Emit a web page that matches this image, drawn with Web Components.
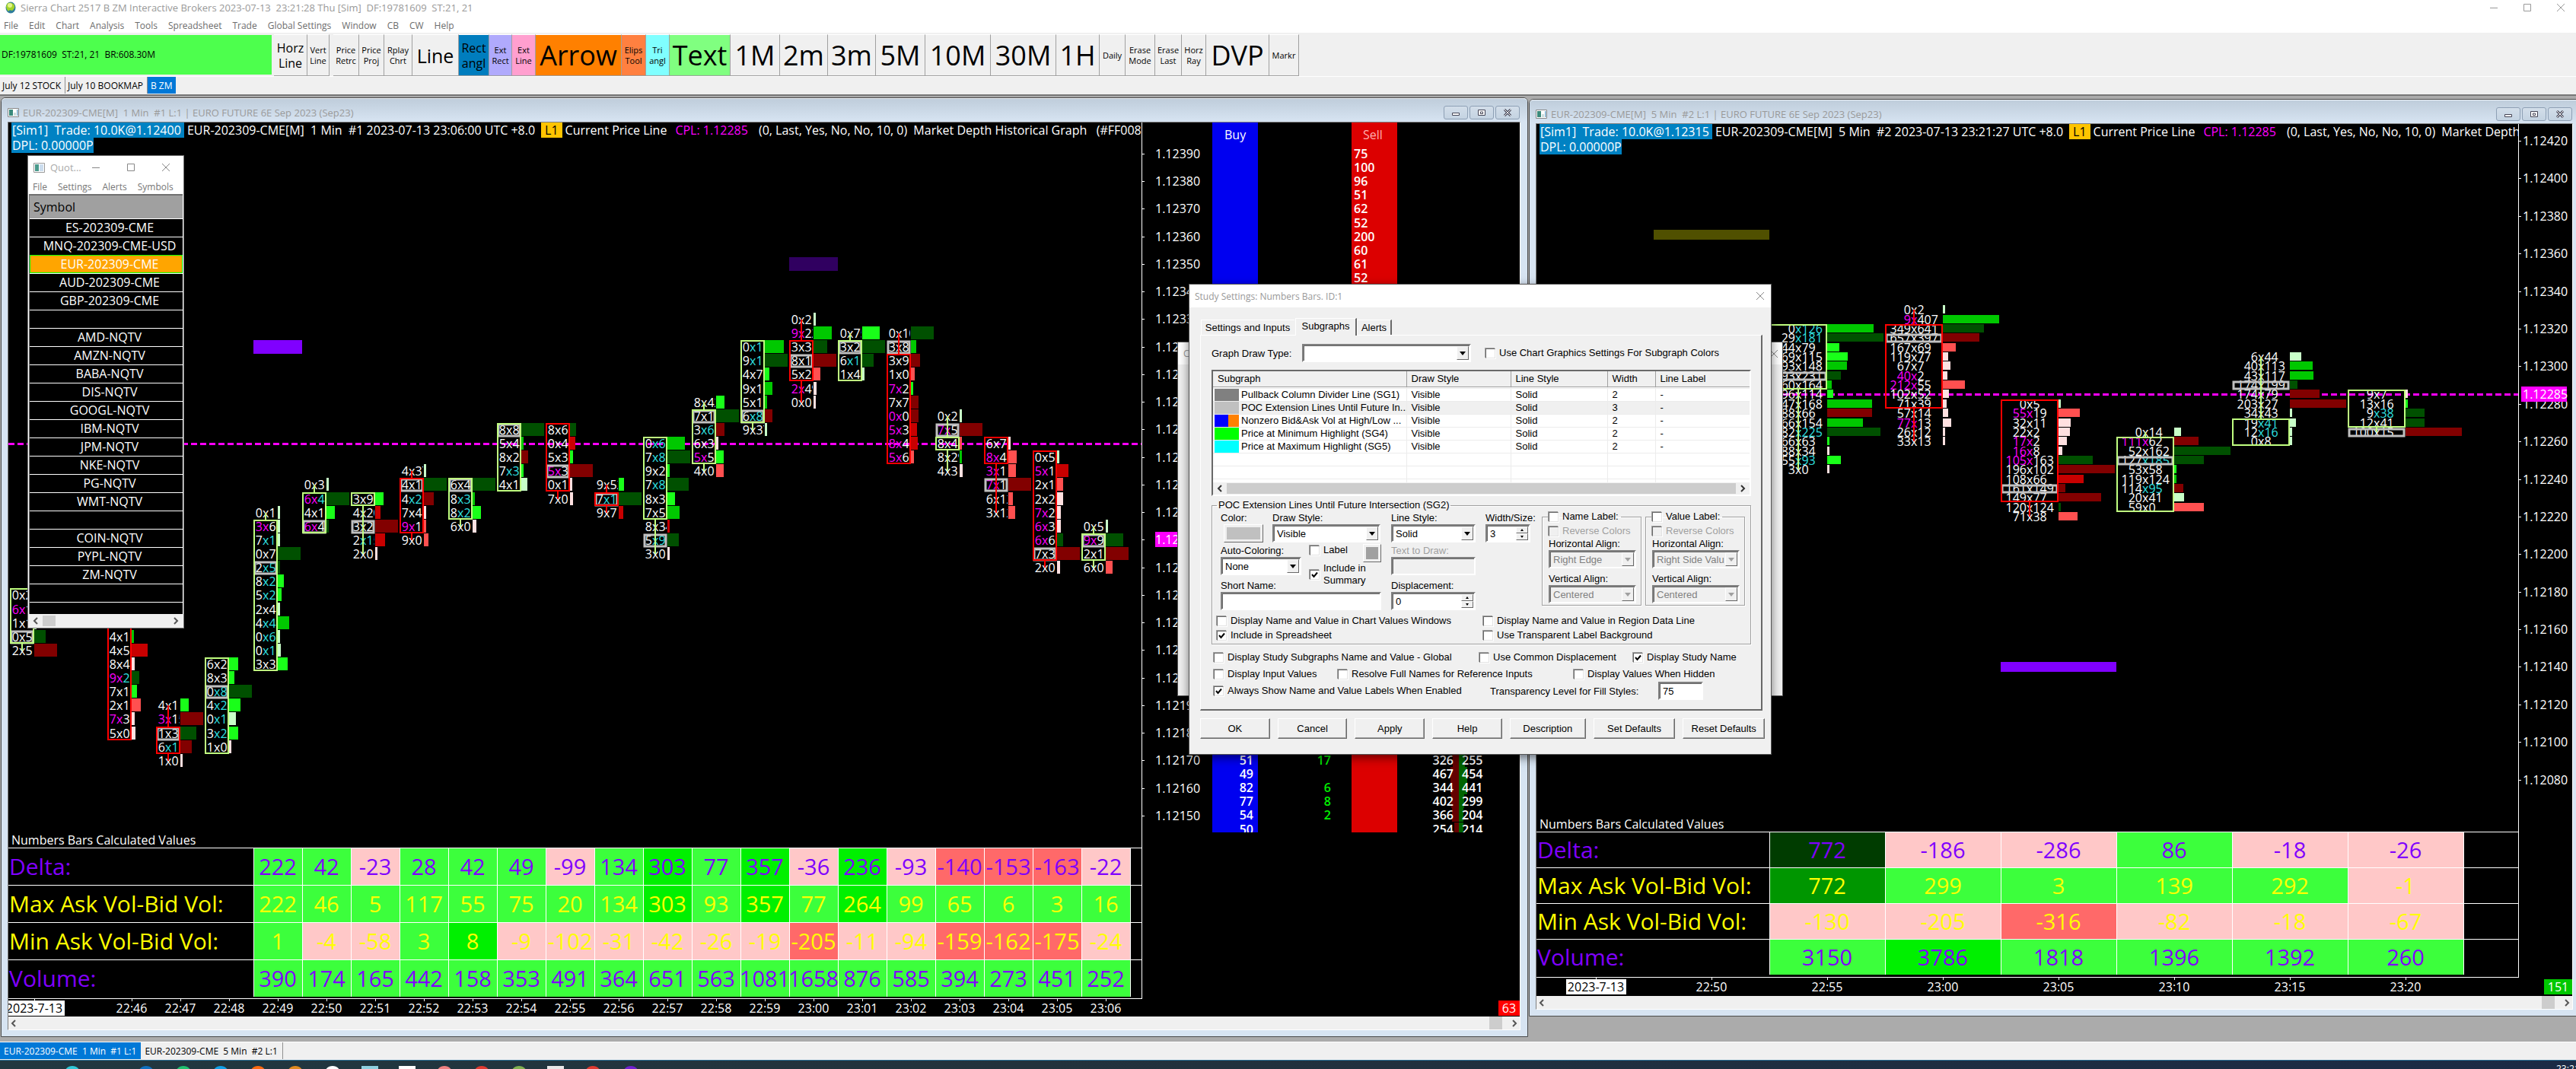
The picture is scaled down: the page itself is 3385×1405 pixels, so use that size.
<!DOCTYPE html>
<html lang="en">
<head>
<meta charset="utf-8">
<title>Sierra Chart</title>
<style>
html,body{margin:0;height:100%;overflow:hidden;background:#ababab}
body{font-family:"Open Sans","Noto Sans",sans-serif}
</style>
</head>
<body>
<sc-app></sc-app>
<script>
const define = (name, html, setup) => customElements.define(name, class extends HTMLElement {
  constructor() {
    super();
    this.attachShadow({ mode: 'open' });
  }
  connectedCallback() {
    if (this.shadowRoot.firstChild) return;
    const t = document.createElement('template');
    t.innerHTML = '<style>*{box-sizing:border-box}:host{display:block;box-sizing:border-box}button{font:inherit;color:inherit;border:0;margin:0;padding:0;background:none}</style>' +
      (typeof html === 'function' ? html(this) : html);
    this.shadowRoot.append(t.content.cloneNode(true));
    if (setup) setup(this, this.shadowRoot);
  }
});

/* ---------- application caption and menu ---------- */
define('sc-caption', `
<style>
:host{display:flex;align-items:center;height:22px;background:#fff;color:#999;font-size:13px;padding:0 0 2px 7px;gap:6px}
svg{display:block}
.t{flex:1;white-space:pre}
.w{display:flex;gap:32px;padding-right:14px}
</style>
<svg width="14" height="16" viewBox="0 0 14 16"><ellipse cx="7" cy="8" rx="6.5" ry="7.5" fill="#2f7d9c"/><path d="M3 2Q9 0 12 5Q13 9 9 12Q5 10 4 13Q1 10 1 6Z" fill="#a3d42a"/><ellipse cx="6" cy="5" rx="3" ry="3" fill="#e3f48a"/></svg>
<span class="t">Sierra Chart 2517 B ZM Interactive Brokers 2023-07-13  23:21:28 Thu [Sim]  DF:19781609  ST:21, 21</span>
<div class="w"><svg width="12" height="12"><path d="M1 6.5h10" stroke="#999"/></svg><svg width="12" height="12"><path d="M1.500 1.500h9v9h-9z" fill="none" stroke="#999"/></svg><svg width="12" height="12"><path d="M1 1l10 10M11 1L1 11" stroke="#999"/></svg></div>`);

define('sc-menu', `
<style>
:host{display:flex;height:21px;background:#fff;color:#6d6d6d;font-size:12px;padding:3px 0 0 5px;gap:14px;align-items:center}
button{height:18px;line-height:18px}
</style>` + ['File','Edit','Chart','Analysis','Tools','Spreadsheet','Trade','Global Settings','Window','CB','CW','Help'].map(x => `<button>${x}</button>`).join(''));

/* ---------- toolbar ---------- */
const TOOLS = [
  ['Horz<br>Line',44,'m'],['Vert<br>Line',29,'s'],['',5,'gap'],['Price<br>Retrc',34,'s'],['Price<br>Proj',33,'s'],['Rplay<br>Chrt',37,'s'],['Line',61,'l'],
  ['Rect<br>angl',40,'m','#007dbe'],['Ext<br>Rect',30,'s','#b0aafc'],['Ext<br>Line',31,'s','#ff9fcf'],['Arrow',113,'x','#ff8000'],['Elips<br>Tool',32,'s','#ff8040'],
  ['Tri<br>angl',31,'s','#80ffff'],['Text',80,'x','#80ff80'],['1M',65,'x'],['2m',63,'x'],['3m',63,'x'],['5M',65,'x'],['10M',86,'x'],['30M',86,'x'],['1H',57,'x'],
  ['Daily',34,'s'],['Erase<br>Mode',39,'s'],['Erase<br>Last',35,'s'],['Horz<br>Ray',32,'s'],['DVP',83,'x'],['Markr',39,'s']];
define('sc-toolbar', `
<style>
:host{display:flex;height:57px;background:#f0f0f0;padding-top:2px;align-items:flex-start}
.acct{flex:none;width:357px;height:52px;margin:1px 3px 0 0;background:#4dff4d;font-size:12px;line-height:52px;padding-left:2px;white-space:pre}
button{flex:none;height:55px;border:solid #a0a0a0;border-width:0 1px 1px 0;border-top:1px solid #fff;color:#000;white-space:nowrap;overflow:visible;display:flex;align-items:center;justify-content:center;text-align:center}
.gap{width:5px;flex:none}
.s{font-size:11px;line-height:14px}.m{font-size:16px;line-height:20px}.l{font-size:25px}.x{font-size:36px}
</style>
<div class="acct">DF:19781609  ST:21, 21  BR:608.30M</div>` +
TOOLS.map(([t,w,c,b]) => c === 'gap' ? '<span class="gap"></span>' : `<button class="${c}" style="width:${w}px;${b ? 'background:' + b : ''}"><span>${t}</span></button>`).join(''));

/* ---------- strips of tabs ---------- */
define('sc-tabs', el => `
<style>
:host{display:flex;background:#f0f0f0;border-top:1px solid #fff;height:24px;align-items:flex-start}
button{height:22px;font-size:12px;padding:0 5px 0 3px;border-right:1px solid #909090;white-space:pre;color:#000}
button[aria-selected=true]{background:#0078d7;color:#fff;border:0;padding:0 4px}
:host([fine]) button{padding:0 6px 0 5px}
</style><div role="tablist" style="display:flex">` +
el.getAttribute('items').split('|').map((t, i) => `<button role="tab" aria-selected="${i == el.getAttribute('active')}">${t}</button>`).join('') + '</div>');

/* ---------- framed chart window ---------- */
define('sc-window', el => `
<style>
:host{display:flex;flex-direction:column;border:1px solid #4a4a4a;border-radius:6px 6px 0 0;background:#d7e4f2;padding:0 9px 8px 8px;min-width:0}
header{display:flex;align-items:center;height:31px;margin:0 -9px 0 -8px;padding:5px 10px 0 8px;background:linear-gradient(#bfcddb,#d7e4f2);border-radius:5px 5px 0 0;gap:5px;font-size:12px;color:#9a9a9a;border-top:1px solid #eef3f8}
h2{font-weight:400;font-size:13px;margin:0;flex:1;white-space:pre}
nav{display:flex;gap:2px}
nav button{width:32px;height:18px;border:1px solid #8ea0b5;border-radius:3px;background:linear-gradient(#d3deea,#c4d3e2);display:flex;align-items:center;justify-content:center}
.body{flex:1;display:flex;flex-direction:column;border:1px solid #808080;border-right-color:#fff;border-bottom-color:#fff;background:#000;min-height:0}
.body ::slotted(*){flex:1;min-height:0}
.sb{display:flex;height:17px;background:#f0f0f0;align-items:center;padding:0 3px;justify-content:space-between}
.sb i{width:17px;height:17px;background:#cdcdcd;margin-left:auto;margin-right:12px}
</style>
<header><svg width="15" height="12"><path d="M.5.500h14v11H.5z" fill="#fff" stroke="#888"/><path d="M2 2h5v8H2z" fill="#3b8a7c"/><path d="M8 6h3v4H8z" fill="#cdd"/><path d="M12 2h1.500v8H12z" fill="#7ac"/></svg>
<h2>${el.getAttribute('name')}</h2>
<nav><button aria-label="Minimize"><svg width="12" height="10"><path d="M1.500 5.500h9v3h-9z" fill="#fff" stroke="#445"/></svg></button><button aria-label="Restore"><svg width="12" height="10"><path d="M1.500 1.500h9v7h-9z M4.500 4h3v2.500h-3z" fill="#fff" stroke="#445"/></svg></button><button aria-label="Close"><svg width="12" height="10"><path d="M2 1l8 8M10 1L2 9" stroke="#445" stroke-width="3"/><path d="M2 1l8 8M10 1L2 9" stroke="#fff"/></svg></button></nav></header>
<div class="body"><slot></slot><div class="sb"><svg width="8" height="10"><path d="M6 1L2 5l4 4" fill="none" stroke="#555" stroke-width="2"/></svg><i></i><svg width="8" height="10"><path d="M2 1l4 4-4 4" fill="none" stroke="#555" stroke-width="2"/></svg></div></div>`);

/* ---------- numbers bars chart ---------- */
const HIST = {a:'#c8ffc8',b:'#19ff19',c:'#00c800',d:'#005000',p:'#ffe0e0',q:'#ff5050',r:'#c80000',s:'#820000'};
const LIME = '#c0ff80', RED = '#ff0000';
/* each column: index, body colour, body first and last row, first row, cells */
const CHARTS = {
  one: {
    col0: 322, pitch: 64, body: 31, row0: 259, rowPitch: 18.12, barH: 17, line: 422,
    rects: [[322,286,64,18,'#8000ff'],[1026,177,64,18,'#300060']],
    head: ['[Sim1]  Trade: 10.0K@1.12400 ','EUR-202309-CME[M]  1 Min  #1 2023-07-13 23:06:00 UTC +8.0','Market Depth Historical Graph   (#FF008'],
    cols: [
      [-5,LIME,20,23,20,'0x2:a3 6x1m:a3 1x1:a3 0x5*:d15 2x5:s30'],
      [-3,RED,22,30,23,'4x1:c3 4x5:r21 8x4:p4 9x2mc:d10 7x1:b7 2x1:q12 7x3m:p4 5x0:p5'],
      [-2,RED,30,31,28,'4x11:b11 3x15m:s30 1x3*:d21 6x1c:s15 1x0:p3'],
      [-1,LIME,25,31,25,'6x2:b12 8x3:b7 0x8c*:d30 4x2c:b15 0x1c:a9 3x2c:b12 1x0:p3'],
      [0,LIME,15,25,14,'0x1:a3 3x6m:a3 7x1c:a3 0x7:d30 2x5c*:d3 8x2c:b8 5x2c:b5 2x4:a3 4x4c:c15 0x6c:a3 0x1c:a4 3x3:b13'],
      [1,LIME,13,15,12,'0x3:a3 6x4mc:d30 4x1:b11 6x4m*:d3'],
      [2,LIME,13,13,13,'3x9:b11 4x20:r7 3x2*:s30 2x15c:r13 2x0:p3'],
      [3,RED,12,15,11,'4x37:a3 4x1*:d30 4x2c:s13 7x4:p3 9x1m:q3 9x0:q6'],
      [4,LIME,12,14,12,'6x4*:d30 8x3c:c3 8x2c:b11 6x0:p5'],
      [5,LIME,8,12,8,'8x8*:d30 5x4:c3 8x2:s9 7x3c:b3 4x1:a8'],
      [6,RED,8,12,8,'8x6:d8 0x4:r7 5x3:b4 5x3m*:s30 0x1:p3 7x0:p4'],
      [7,RED,13,13,12,'9x52:b7 7x1c*:d30 9x7:r6'],
      [8,LIME,9,14,9,'0x6c:c23 7x8c:d30 9x2:b3 7x8c:d28 8x3:b10 7x5:c16 8x34:r3 5x9c*:d15 3x0:p3'],
      [9,LIME,7,10,6,'8x42:b11 7x1*:d30 3x6c:s11 6x3:p3 5x5m:b10 4x0:q10'],
      [10,LIME,2,7,2,'0x1c:c25 9x1c:d30 4x7:b6 9x1:c10 5x1:c3 6x8c*:s10 9x37:a3'],
      [11,RED,2,4,0,'0x2:a3 9x22m:c24 3x3:d18 8x1*:s30 5x2:q9 2x49m:p4 0x0:p3'],
      [12,LIME,2,4,1,'0x75:b23 3x2*:d30 6x1c:d15 1x4:a3'],
      [13,RED,3,10,1,'0x10:d30 3x8*:c7 3x9:s12 1x0:q5 7x2m:b3 7x7:s10 0x0m:s10 5x3m:r8 8x4m:r9 5x6m:q4'],
      [14,LIME,9,9,7,'0x2:a3 7x5m*:s30 8x4:q3 8x29:c3 4x3:p4'],
      [15,RED,9,10,9,'6x7:p3 8x4m:q11 3x11m:q10 7x1m*:s30 6x12:q6 3x12:q9'],
      [16,RED,10,17,10,'0x5:a3 5x1m:r15 2x1:q8 2x2:p8 7x2m:p5 6x3m:p5 6x6m:d8 7x3*:s30 2x0:p4'],
      [17,LIME,16,17,15,'0x5:a3 9x9m*:d23 2x1:s30 6x0:q9']],
    axisW: 497, labelX: 17, scale: { top: 1.1239, y: 41, step: 36.24, n: 25, dec: .0001 }, tag: [548,'1.12250',17,62],
    label: 322, cell: 64, rowH: 49, foot: 2,
    table: [
      ['Delta:','#8000ff','222 42 -23 28 42 49 -99 134 303! 77 357! -36 236! -93 -140! -153! -163! -22'],
      ['Max Ask Vol-Bid Vol:','#ffff00','222 46 5 117 55 75 20 134 303! 93 357! 77 264! 99 65 6 3 16'],
      ['Min Ask Vol-Bid Vol:','#ffff00','1 -4 -58 3 8! -9 -102 -31 -42 -26 -19 -205! -11 -94 -159! -162! -175! -24'],
      ['Volume:','#8000ff','390 174 165 442 158 353 491 364 651 563 1081 1658 876 585 394 273 451 252']],
    timeH: 23, dateX: 34, timeX: 162, times: '22:46 22:47 22:48 22:49 22:50 22:51 22:52 22:53 22:54 22:55 22:56 22:57 22:58 22:59 23:00 23:01 23:02 23:03 23:04 23:05 23:06',
    count: ['63','#ff0000',28]
  },
  two: {
    col0: 306, pitch: 152, body: 75, row0: 22, rowPitch: 12.35, barH: 11, line: 355,
    rects: [[154,139,152,13,'#505000'],[610,707,152,13,'#8000ff']],
    head: ['[Sim1]  Trade: 10.0K@1.12315 ','EUR-202309-CME[M]  5 Min  #2 2023-07-13 23:21:27 UTC +8.0','Market Depth'],
    cols: [
      [0,LIME,20,26,20,'0x126c:c61 29x181c:d74 144x79:b16 169x115:b27 193x148:c26 193x231*:d18 160x164:c6 196x114:b8 147x168:c59 188x66:s59 166x154:c47 182x225c:d70 166x63:b3 88x34:p3 155x93c:b18 3x0:p3'],
      [1,RED,20,28,18,'0x2:a3 9x407m:c74 349x641:d54 657x397*:s48 167x69:q17 119x77:p7 67x7:p10 40x2m:p6 212x55m:q29 102x52:p8 71x39:p5 57x14:p7 77x13m:p11 26x12:p3 33x13:p3'],
      [2,RED,28,38,28,'0x5:a3 55x19m:q28 32x11:p16 22x2:p15 17x2m:p11 16x8m:p5 105x163m:d45 196x102:s74 108x66:r33 161x149*:s9 149x77:s56 120x124:d3 71x38:q25'],
      [3,LIME,32,39,31,'0x14:a9 111x62m:s32 52x162:d74 127x185c*:d39 53x58:b3 119x124:c3 114x95c:s12 20x41:a13 59x0:q39'],
      [4,LIME,30,32,23,'6x44:a15 40x113:c30 43x117:c31 174x199*:d10 174x79:s39 203x27:s74 34x43:a3 19x41c:a8 12x16c:a3 0x8:a3'],
      [5,LIME,27,30,27,'9x7:p3 13x16:b3 9x38c:d25 12x41:d25 100x15*:s74']],
    axisW: 71, labelX: 5, scale: { top: 1.1242, y: 22, step: 49.39, n: 18, dec: .0002 }, tag: [355,'1.12285',3,60],
    label: 306, cell: 152, rowH: 47, foot: 3,
    table: [
      ['Delta:','#8000ff','772!!! -186 -286 86 -18 -26'],
      ['Max Ask Vol-Bid Vol:','#ffff00','772!! 299 3 139 292 -1'],
      ['Min Ask Vol-Bid Vol:','#ffff00','-130 -205 -316! -82 -18 -67'],
      ['Volume:','#8000ff','3150 3786! 1818 1396 1392 260']],
    timeH: 24, dateX: 78, timeX: 230, times: '22:50 22:55 23:00 23:05 23:10 23:15 23:20',
    count: ['151','#00c800',37]
  }
};
const R = Math.round;
function bars(c) {
  let s = `<path d="M0 ${c.line}.500H3000" stroke="#ff00ff" stroke-width="3" stroke-dasharray="8 4"/>`;
  for (const [x,y,w,h,f] of c.rects) s += `<rect x="${x}" y="${y}" width="${w}" height="${h}" fill="${f}"/>`;
  let over = '';
  for (const [k,color,b0,b1,first,str] of c.cols) {
    const x = c.col0 + k * c.pitch, mid = x + R(c.body / 2), cy = i => R(c.row0 + i * c.rowPitch), half = c.rowPitch / 2;
    const cells = str.split(' ');
    cells.forEach((cell, n) => {
      const [, l, r, f, h, w] = cell.match(/^(\d+)x(\d+)([mc*]*):(\w)(\d+)$/);
      const y = cy(first + n), m = f.includes('m'), cc = f.includes('c');
      s += `<rect x="${x + c.body + 1}" y="${y - R(c.barH / 2)}" width="${w}" height="${c.barH}" fill="${HIST[h]}"/>`;
      s += `<svg x="${x}" y="${y - 12}" width="${c.body}" height="24"><g transform="translate(${-x} ${12 - y})"><text x="${mid - 4}" y="${y + 6}" text-anchor="end" fill="${m ? '#f0f' : '#fff'}">${l}</text><text x="${mid - 4}" y="${y + 6}" fill="${cc ? '#30e0e0' : '#fff'}"><tspan fill="${m ? '#f0f' : cc ? '#30e0e0' : '#fff'}">x</tspan>${r}</text></g></svg>`;
      if (f.includes('*')) over += `<rect x="${x + 2}" y="${y - R(half) + 2}" width="${c.body - 3}" height="${R(c.rowPitch) - 3}" fill="none" stroke="#c0c0c0" stroke-width="3"/>`;
    });
    const top = cy(b0) - R(half) + 1, bot = cy(b1) + R(half) - 1;
    over += `<rect x="${x + 1}" y="${top}" width="${c.body - 1}" height="${bot - top}" fill="none" stroke="${color}" stroke-width="2"/>`;
    if (first < b0) over += `<path d="M${mid} ${cy(first)}V${top}" stroke="${color}" stroke-width="2"/>`;
    const last = first + cells.length - 1;
    if (last > b1) over += `<path d="M${mid} ${bot}V${cy(last)}" stroke="${color}" stroke-width="2"/>`;
  }
  return s + over;
}
function prices(c) {
  let s = '';
  for (let i = 0; i < c.scale.n; i++) {
    const y = R(c.scale.y + i * c.scale.step);
    s += `<path d="M0 ${y}.500h3" stroke="#fff"/><text x="${c.labelX}" y="${y + 6}" fill="#fff">${(c.scale.top - i * c.scale.dec).toFixed(5)}</text>`;
  }
  const [y, t, x, w] = c.tag;
  return s + `<rect x="${x}" y="${y - 10}" width="${w}" height="20" fill="#ff00ff"/><text x="${c.labelX}" y="${y + 6}" fill="#fff">${t}</text>`;
}
function ladder() {
  let s = '<rect x="92" width="60" height="933" fill="#0000f0"/><rect x="275" width="60" height="933" fill="#dc0000"/><text x="108" y="22" fill="#fff">Buy</text><text x="290" y="22" fill="#ffb0b0">Sell</text><g font-weight="600">';
  '75 100 96 51 62 52 200 60 61 52'.split(' ').forEach((v, i) => s += `<text x="278" y="${R(47 + i * 18.12)}" fill="#fff">${v}</text>`);
  [[51,17,326,255,8,8],[49,'',467,454,11,11],[82,6,344,441,11,11],[77,8,402,299,10,7],[54,2,366,204,9,6],[50,'',254,214,6,6]].forEach(([a, g, l, r, w1, w2], i) => {
    const y = R(838 + i * 18.12);
    s += `<rect x="${416 - w1}" y="${y - 9}" width="${w1}" height="18" fill="#640000"/><rect x="416" y="${y - 9}" width="${w2}" height="18" fill="#006400"/>`;
    s += `<text x="146" y="${y + 6}" text-anchor="end" fill="#fff">${a}</text><text x="248" y="${y + 6}" text-anchor="end" fill="#00f000">${g}</text><text x="409" y="${y + 6}" text-anchor="end" fill="#fff">${l}</text><text x="420" y="${y + 6}" fill="#fff">${r}</text>`;
  });
  return `<svg x="0" y="0" width="497" height="933">${s}</g></svg>`;
}
function shade(v) {
  const n = (v.match(/!/g) || []).length, neg = v[0] === '-';
  return neg ? ['#ffc8c8','#ff6969'][n] : ['#3cff3c','#00f000','#009600','#003c00'][n];
}
define('sc-chart', el => {
  const c = CHARTS[el.getAttribute('data')];
  const [trade, series, depth] = c.head;
  return `
<style>
:host{display:flex;flex-direction:column;background:#000;color:#fff;font-size:16px}
svg{display:block;font-size:16px}
.main{flex:1;display:flex;min-height:0}
.plot{flex:1;min-width:0;display:flex;flex-direction:column;position:relative;border-bottom:1px solid #fff;overflow:hidden;padding-bottom:${c.foot}px}
.plot>svg{flex:1;min-height:0;width:100%}
.axis{flex:none;width:${c.axisW}px;border-left:1px solid #fff;display:flex}
.axis>svg{width:100%;height:100%}
.info{position:absolute;left:4px;right:0;top:0;line-height:20px;white-space:pre;overflow:hidden}
.info p{margin:0;display:flex;gap:4px}
.info b{font-weight:400;background:#0082c3;padding-left:1px}
.info i{font-style:normal;background:#ffc400;color:#000;padding:0 5px;margin-left:4px}
.info em{font-style:normal;color:#f0f;padding:0 10px 0 7px}
h3{margin:0;font-weight:400;font-size:16px;line-height:20px;padding-left:4px}
table{border-collapse:collapse;table-layout:fixed;width:100%;font-size:29px;line-height:${c.rowH - 1}px}
th,td{padding:0;height:${c.rowH}px;border-top:1px solid #fff;font-weight:400;overflow:visible;white-space:nowrap}
th{text-align:left;width:${c.label}px;padding-left:1px;font-size:30px}
td{width:${c.cell}px;text-align:center;border-left:1px solid #fff}
td span{display:flex;justify-content:center}
td:last-child{width:auto}
</style>
<div class="main"><div class="plot"><svg aria-hidden="true">${bars(c)}</svg>
<div class="info"><p><b>${trade}</b><span>${series}</span><i>L1</i><span>Current Price Line</span><em>CPL: 1.12285</em><span>(0, Last, Yes, No, No, 10, 0)</span><span> ${depth}</span></p><p><b>DPL: 0.00000P</b></p></div>
<h3>Numbers Bars Calculated Values</h3>
<table>${c.table.map(([n, col, vals]) => `<tr style="color:${col}"><th scope="row">${n}</th>${vals.split(' ').map(v => `<td style="background:${shade(v)}"><span>${v.replace(/!/g, '')}</span></td>`).join('')}<td></td></tr>`).join('')}</table></div>
<div class="axis"><svg>${prices(c)}${c.axisW > 200 ? ladder() : ''}</svg></div></div>
<svg width="100%" height="${c.timeH}"><rect x="${c.dateX - 39}" y="2" width="79" height="20" fill="#fff"/><g text-anchor="middle"><path d="M${c.dateX}.500 0v3" stroke="#fff"/><text x="${c.dateX}" y="18" fill="#000">2023-7-13</text>${c.times.split(' ').map((t, i) => `<path d="M${c.timeX + i * c.pitch}.500 0v3" stroke="#fff"/><text x="${c.timeX + i * c.pitch}" y="18" fill="#fff">${t}</text>`).join('')}</g>
<svg x="100%" overflow="visible"><rect x="${-c.count[2]}" y="2" width="${c.count[2]}" height="20" fill="${c.count[1]}"/><text x="${-c.count[2] / 2}" y="18" text-anchor="middle" fill="#fff">${c.count[0]}</text></svg></svg>`;
});

/* ---------- quote board ---------- */
const SYMBOLS = ['ES-202309-CME','MNQ-202309-CME-USD','EUR-202309-CME','AUD-202309-CME','GBP-202309-CME','','AMD-NQTV','AMZN-NQTV','BABA-NQTV','DIS-NQTV','GOOGL-NQTV','IBM-NQTV','JPM-NQTV','NKE-NQTV','PG-NQTV','WMT-NQTV','','COIN-NQTV','PYPL-NQTV','ZM-NQTV','',''];
define('sc-quotes', `
<style>
:host{width:206px;height:622px;background:#fff;border:1px solid #777;display:flex;flex-direction:column;font-size:12px;color:#888}
header{display:flex;align-items:center;height:30px;padding:0 17px 0 7px;gap:7px}
header b{font-weight:400;flex:1;font-size:13px;color:#aaa}
header .w{display:flex;gap:34px}
nav{display:flex;gap:14px;height:20px;padding-left:6px;align-items:center;color:#777}
.list{flex:1;min-height:0;overflow:hidden;margin:0 1px 0 1px;border:solid #707070;border-width:2px 0 0 1px;background:#000}
table{border-collapse:collapse;width:100%;font-size:16px;color:#fff}
th{background:#a0a0a0;color:#000;font-weight:400;text-align:left;height:30px;padding:0 0 0 5px}
td{height:24px;line-height:22px;padding:0 0 0 9px;text-align:center;border-top:1px solid #fff;white-space:nowrap}
tr.sel td{background:#ffa500;outline:1px solid #0f0;outline-offset:-1px}
.sb{display:flex;height:18px;background:#f0f0f0;align-items:center;padding:0 6px}
.sb i{width:17px;height:14px;background:#cdcdcd;margin:0 auto 0 5px}
</style>
<header><svg width="15" height="13"><path d="M.5.500h14v12H.5z" fill="#fff" stroke="#999"/><path d="M2 2h5v9H2z" fill="#4a9a8c"/><path d="M8 2h5v9H8z" fill="#cde"/></svg><b>Quot...</b><div class="w"><svg width="12" height="12"><path d="M1 6.500h10" stroke="#888"/></svg><svg width="12" height="12"><path d="M1.500 1.500h9v9h-9z" fill="none" stroke="#888"/></svg><svg width="12" height="12"><path d="M1 1l10 10M11 1L1 11" stroke="#888"/></svg></div></header>
<nav><button>File</button><button>Settings</button><button>Alerts</button><button>Symbols</button></nav>
<div class="list"><table><tr><th scope="col">Symbol</th></tr>${SYMBOLS.map(s => `<tr${s.startsWith('EUR') ? ' class="sel"' : ''}><td>${s}</td></tr>`).join('')}</table></div>
<div class="sb"><svg width="8" height="10"><path d="M6 1L2 5l4 4" fill="none" stroke="#555" stroke-width="2"/></svg><i></i><svg width="8" height="10"><path d="M2 1l4 4-4 4" fill="none" stroke="#555" stroke-width="2"/></svg></div>`);

/* ---------- form parts ---------- */
define('sc-check', el => `
<style>
:host{display:flex;flex:none;font-size:13px;line-height:16px}
label{display:flex;align-items:center;gap:5px;white-space:pre-line;color:${el.hasAttribute('disabled') ? '#a0a0a0' : '#000'}}
input{appearance:none;margin:0;flex:none;width:13px;height:13px;background:${el.hasAttribute('disabled') ? '#f0f0f0' : '#fff'};border:1px solid;border-color:#696969 #e3e3e3 #e3e3e3 #696969;box-shadow:1px 1px 0 #fff,-1px -1px 0 #a0a0a0}
.k{display:grid}.k>*{grid-area:1/1}.k svg{pointer-events:none}
</style>
<label><span class="k"><input type="checkbox"${el.hasAttribute('checked') ? ' checked' : ''}${el.hasAttribute('disabled') ? ' disabled' : ''}>${el.hasAttribute('checked') ? '<svg width="13" height="13"><path d="M3 6l2.500 3L10 3.500" fill="none" stroke="#000" stroke-width="2"/></svg>' : ''}</span><span>${el.getAttribute('label')}</span></label>`);

define('sc-field', el => {
  const a = n => el.getAttribute(n) || '', dis = el.hasAttribute('disabled') ? ' disabled' : '', kind = a('kind');
  const box = kind === 'select' ? `<select id="f"${dis}><option>${a('value')}</option></select><i><svg width="8" height="5"><path d="M0 0h8L4 5z"/></svg></i>`
    : `<input id="f" type="text" value="${a('value')}"${dis}>` + (kind === 'spin' ? '<u class="up"><svg width="4" height="3"><path d="M0 3h4L2 0z"/></svg></u><u class="dn"><svg width="4" height="3"><path d="M0 0h4L2 3z"/></svg></u>' : '');
  return `
<style>
:host{display:flex;flex:none;flex-direction:column;font-size:13px;color:#000}
:host([inline]){flex-direction:row;align-items:center;justify-content:space-between}
label{line-height:17px;white-space:nowrap;color:${el.hasAttribute('dim') ? '#a0a0a0' : '#000'}}
.b{display:grid;grid-template-columns:1fr 16px;grid-template-rows:1fr 1fr;width:${a('w')}px;height:24px;background:${dis ? '#f0f0f0' : '#fff'};border:2px solid;border-color:#808080 #fff #fff #808080;box-shadow:inset 1px 1px 0 #696969;padding:1px}
select,input{grid-area:1/1/3/3;appearance:none;font:inherit;border:0;background:none;margin:0;padding:0 0 0 3px;width:100%;min-width:0;min-height:0;height:18px;color:${dis ? '#808080' : '#000'};opacity:1;outline:0}
i,u{background:#f0f0f0;border:1px solid;border-color:#fff #696969 #696969 #fff;display:flex;align-items:center;justify-content:center;pointer-events:none;z-index:1;min-height:0}
i{grid-area:1/2/3/3}.up{grid-area:1/2}.dn{grid-area:2/2}
path{fill:${dis ? '#a0a0a0' : '#000'}}
</style>
${a('label') ? `<label for="f">${a('label')}</label>` : ''}<div class="b">${box}</div>`;
});

/* ---------- study settings dialog ---------- */
const GRAPHS = [['#808080','Pullback Column Divider Line (SG1)',2],['#c0c0c0','POC Extension Lines Until Future In...',3],['linear-gradient(90deg,#00f 55%,#ff8000 55%)','Nonzero Bid&amp;Ask Vol at High/Low ...',2],['#00ff00','Price at Minimum Highlight (SG4)',2],['#00ffff','Price at Maximum Highlight (SG5)',2]];
const aligned = (name, h) => `<fieldset class="lab"><legend><sc-check label="${name} Label:"></sc-check></legend><sc-check label="Reverse Colors" disabled></sc-check><sc-field label="Horizontal Align:" kind="select" value="${h}" w="115" disabled></sc-field><sc-field class="v" label="Vertical Align:" kind="select" value="Centered" w="115" disabled></sc-field></fieldset>`;
define('sc-settings', `
<style>
:host{width:766px;height:619px;background:#f0f0f0;border:1px solid #555;box-shadow:0 4px 12px #0008;font:13px "Liberation Sans",Arial,sans-serif;color:#000}
header{display:flex;justify-content:space-between;align-items:center;height:30px;background:#fff;color:#999;padding:0 8px 0 7px;font:12px "Open Sans",sans-serif}
.tabs{display:flex;align-items:flex-end;height:36px;padding-left:15px}
.tabs button{width:124px;height:20px;border:solid;border-width:1px 2px 0 1px;border-color:#fff #f0f0f0 #fff #fff}
.tabs button.on{width:81px;height:23px;border-right-color:#696969;padding:0 0 3px;position:relative;margin-bottom:-1px;background:#f0f0f0;z-index:1}
.tabs button:last-child{width:46px;border-right-color:#696969}
.panel{margin:0 11px 0 14px;height:494px;border:solid;border-width:1px 2px 2px 1px;border-color:#fff #696969 #696969 #fff;padding:11px 13px 0 14px}
.row{display:flex;align-items:center}
.list{margin:10px 0 0;height:166px;background:#fff;border:2px solid;border-color:#696969 #fff #fff #696969;display:flex;flex-direction:column}
.tw{flex:1;overflow:hidden}
table{border-collapse:collapse;table-layout:fixed;width:100%}
th{background:#f0f0f0;font-weight:400;text-align:left;height:20px;padding:0 0 0 6px;border:solid #a0a0a0;border-width:0 1px 1px 0}
th:last-child{border-right:0}
td{height:17px;line-height:16px;padding:0 0 0 6px;border:solid #ececec;border-width:0 1px 1px 0;white-space:nowrap;overflow:hidden}
td:last-child{border-right:0}
td:first-child{padding-left:2px}
td div{display:flex;gap:3px;align-items:center}
td i{flex:none;width:32px;height:16px}
.on td{background:#f0f0f0}
tr.sp td{height:2px}
.sb{display:flex;height:16px;align-items:center;background:#f0f0f0;padding:0 5px;gap:5px}
.sb i{flex:1;height:14px;background:#cdcdcd}
fieldset{margin:0;border:1px solid #a0a0a0;box-shadow:inset 1px 1px 0 #fff,1px 1px 0 #fff;min-width:0}
.grp{margin-top:4px;padding:0 7px 0 11px;height:191px}
.grp>legend{padding:0 2px;margin-left:-5px;line-height:16px}
.cols{display:flex;gap:5px;height:125px}
.left{flex:1;display:flex;flex-direction:column;gap:2px}
.left .row{align-items:flex-start}
.lab{width:131px;height:125px;padding:0 0 0 8px;margin-top:-1px;display:block}
.lab legend{margin-left:0;padding:0 3px 0 0}
.lab .v{margin-top:5px}
.lab>sc-check{margin-top:3px}
.sw{width:52px;height:24px;border:1px solid;border-color:#fff #696969 #696969 #fff;background:#c0c0c0;box-shadow:inset 0 0 0 3px #f0f0f0;display:block}
.sw.small{width:24px;height:24px;background:#a0a0a0}
.field{display:flex;flex-direction:column}
.field label{line-height:17px}
.chk{display:grid;grid-template-columns:350px auto;gap:3px 0;margin:11px 0 0 -5px}
.opts{display:grid;gap:6px;margin:9px 0 0 3px}
.opts .row{height:16px}
footer{display:flex;gap:10px;margin:10px 8px 0 14px}
footer button{height:27px;width:92px;border:1px solid;border-color:#fff #696969 #696969 #fff;box-shadow:inset -1px -1px 0 #a0a0a0}
footer .a{width:100px}footer .c{width:108px}
</style>
<header><span>Study Settings: Numbers Bars. ID:1</span><svg width="12" height="12"><path d="M1 1l10 10M11 1L1 11" stroke="#888"/></svg></header>
<div class="tabs" role="tablist"><button role="tab">Settings and Inputs</button><button role="tab" class="on">Subgraphs</button><button role="tab">Alerts</button></div>
<div class="panel">
<div class="row" style="gap:19px"><sc-field inline label="Graph Draw Type:" kind="select" value="" w="222" style="width:341px"></sc-field><sc-check label="Use Chart Graphics Settings For Subgraph Colors"></sc-check></div>
<div class="list"><div class="tw"><table><colgroup><col style="width:254px"><col style="width:137px"><col style="width:127px"><col style="width:63px"><col></colgroup>
<tr><th>Subgraph</th><th>Draw Style</th><th>Line Style</th><th>Width</th><th>Line Label</th></tr><tr class="sp"><td></td><td></td><td></td><td></td><td></td></tr>
${GRAPHS.map(([c, n, w], i) => `<tr${i === 1 ? ' class="on"' : ''}><td><div><i style="background:${c}"></i>${n}</div></td><td>Visible</td><td>Solid</td><td>${w}</td><td>-</td></tr>`).join('')}
${'<tr><td></td><td></td><td></td><td></td><td></td></tr>'.repeat(3)}</table></div>
<div class="sb"><svg width="8" height="10"><path d="M6 1L2 5l4 4" fill="none" stroke="#333" stroke-width="2"/></svg><i></i><svg width="8" height="10"><path d="M2 1l4 4-4 4" fill="none" stroke="#333" stroke-width="2"/></svg></div></div>
<fieldset class="grp"><legend>POC Extension Lines Until Future Intersection (SG2)</legend>
<div class="cols"><div class="left">
<div class="row"><div class="field" style="width:68px"><label for="col">Color:</label><button id="col" class="sw" style="margin-left:4px"></button></div><sc-field label="Draw Style:" kind="select" value="Visible" w="142" style="margin-right:14px"></sc-field><sc-field label="Line Style:" kind="select" value="Solid" w="111" style="margin-right:13px"></sc-field><sc-field label="Width/Size:" kind="spin" value="3" w="59"></sc-field></div>
<div class="row"><sc-field label="Auto-Coloring:" kind="select" value="None" w="106"></sc-field><div style="width:118px;padding-left:11px"><div class="row" style="justify-content:space-between;padding-right:13px;height:24px"><sc-check label="Label"></sc-check><button class="sw small" aria-label="Label color"></button></div><sc-check checked label="Include in
Summary"></sc-check></div><sc-field label="Text to Draw:" dim disabled value="" w="111"></sc-field></div>
<div class="row" style="margin-top:-12px"><sc-field label="Short Name:" value="" w="211" style="margin-right:13px"></sc-field><sc-field label="Displacement:" kind="spin" value="0" w="111"></sc-field></div>
</div>${aligned('Name', 'Right Edge')}${aligned('Value', 'Right Side Valu')}</div>
<div class="chk"><sc-check label="Display Name and Value in Chart Values Windows"></sc-check><sc-check label="Display Name and Value in Region Data Line"></sc-check><sc-check checked label="Include in Spreadsheet"></sc-check><sc-check label="Use Transparent Label Background"></sc-check></div>
</fieldset>
<div class="opts"><div class="row"><sc-check style="width:349px" label="Display Study Subgraphs Name and Value - Global"></sc-check><sc-check style="width:202px" label="Use Common Displacement"></sc-check><sc-check checked label="Display Study Name"></sc-check></div>
<div class="row"><sc-check style="width:163px" label="Display Input Values"></sc-check><sc-check style="width:310px" label="Resolve Full Names for Reference Inputs"></sc-check><sc-check label="Display Values When Hidden"></sc-check></div>
<div class="row"><sc-check style="width:363px" checked label="Always Show Name and Value Labels When Enabled"></sc-check><sc-field inline label="Transparency Level for Fill Styles:" value="75" w="59" style="width:280px"></sc-field></div></div>
</div>
<footer><button>OK</button><button>Cancel</button><button>Apply</button><button>Help</button><button class="a">Description</button><button class="c">Set Defaults</button><button class="c">Reset Defaults</button></footer>`);

define('sc-underlay', `
<style>
:host{width:796px;height:466px;background:#f0f0f0;border:1px solid #555}
header{display:flex;justify-content:space-between;align-items:center;height:29px;background:#fff;color:#999;padding:0 5px 0 7px;font-size:12px}
</style><header><span>C</span><svg width="12" height="12"><path d="M1 1l10 10M11 1L1 11" stroke="#888"/></svg></header>`);

/* ---------- operating system bar ---------- */
const DOCK = [[95,'#30c8d8'],[192,'#1070c0'],[241,'#20c070'],[290,'#10a0e8'],[339,'#ff6a10'],[388,'#e08a20'],[437,'#fff'],[486,'#8fd0e0',1],[535,'#fff',1],[584,'#f08080'],[633,'#e03a30'],[682,'#80b050'],[730,'#e8e8e8',1],[779,'#e03a30'],[829,'#7020d0']];
define('sc-taskbar', `
<style>
:host{height:12px;background:linear-gradient(90deg,#213840,#22323c 40%,#1b2a45);border-top:1px solid #2a6f95;overflow:hidden;display:flex;color:#fff;font-size:12px}
svg{flex:1;min-width:0;height:11px}
span{line-height:16px;padding:3px 1px 0 0;width:26px;overflow:hidden;height:40px}
</style><svg>${DOCK.map(([x, c, sq]) => sq ? `<rect x="${x - 11}" y="7" width="22" height="10" fill="${c}"/>` : `<circle cx="${x}" cy="18" r="11" fill="${c}"/>`).join('')}</svg><span>23:21</span>`);

define('sc-app', `
<style>
:host{display:flex;flex-direction:column;height:100vh;color:#000}
main{flex:1;min-height:0;position:relative;display:flex;gap:1px;padding:2px 0 0 1px;border-top:2px solid #777;background:#ababab}
sc-window{position:relative}
.a{flex:0 0 2007px;margin-bottom:6px}
.b{flex:1;margin:2px -6px 33px 0}
sc-quotes,sc-settings,sc-underlay{position:absolute}
sc-quotes{left:36px;top:78px}
sc-underlay{left:1547px;top:323px}
sc-settings{left:1562px;top:247px}
</style>
<sc-caption></sc-caption><sc-menu></sc-menu><sc-toolbar></sc-toolbar>
<sc-tabs items="July 12 STOCK|July 10 BOOKMAP|B ZM" active="2"></sc-tabs>
<main><sc-window class="a" name="EUR-202309-CME[M]  1 Min  #1 L:1 | EURO FUTURE 6E Sep 2023 (Sep23)"><sc-chart data="one"></sc-chart></sc-window>
<sc-window class="b" name="EUR-202309-CME[M]  5 Min  #2 L:1 | EURO FUTURE 6E Sep 2023 (Sep23)"><sc-chart data="two"></sc-chart></sc-window>
<sc-quotes></sc-quotes><sc-underlay></sc-underlay><sc-settings></sc-settings></main>
<sc-tabs fine items="EUR-202309-CME  1 Min  #1 L:1|EUR-202309-CME  5 Min  #2 L:1" active="0"></sc-tabs>
<sc-taskbar></sc-taskbar>`);
</script>
</body>
</html>
